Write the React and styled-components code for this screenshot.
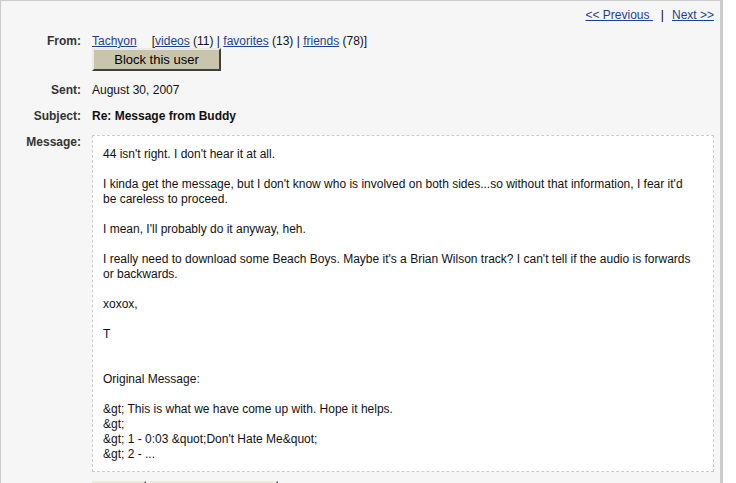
import styled, { createGlobalStyle } from "styled-components";

const Global = createGlobalStyle`
  html, body {
    margin: 0;
    padding: 0;
    background: #ffffff;
  }
  body {
    font-family: "Liberation Sans", Arial, sans-serif;
    font-size: 12px;
    color: #000;
  }
`;

const Panel = styled.div`
  width: 719px;
  height: 483px;
  overflow: hidden;
  background-color: #f6f6f6;
  border-top: 1px solid #cccccc;
  border-left: 1px solid #cccccc;
  border-right: 3px solid #cccccc;
`;

const Nav = styled.div`
  display: flex;
  justify-content: flex-end;
  align-items: center;
  gap: 8px;
  height: 27px;
  padding-right: 6px;
  line-height: 14px;
  box-sizing: border-box;
`;

const Link = styled.a`
  color: #1c3f94;
  text-decoration: underline;
  cursor: pointer;
  white-space: pre;
`;

const Sep = styled.span`
  color: #000;
`;

const Grid = styled.div`
  display: grid;
  grid-template-columns: 80px 622px;
  column-gap: 11px;
`;

const Label = styled.div`
  padding: 6px 0;
  text-align: right;
  font-weight: bold;
  color: #333333;
  line-height: 14px;
`;

const Value = styled.div`
  padding: 6px 0;
  line-height: 14px;
  font-weight: ${(p) => (p.$bold ? "bold" : "normal")};
  color: #111;
`;

const UserLine = styled.div`
  display: flex;
  gap: 15px;
`;

const Button = styled.button`
  display: block;
  font-family: "Liberation Sans", Arial, sans-serif;
  font-size: 13px;
  height: 23px;
  width: ${(p) => p.$w || "auto"};
  padding: 0 12px;
  background-color: #c9c5ad;
  color: #000;
  border-top: 2px solid #ecebe2;
  border-left: 2px solid #ecebe2;
  border-right: 2px solid #404040;
  border-bottom: 2px solid #404040;
  cursor: pointer;
`;

const MessageBox = styled.div`
  background: #ffffff;
  border: 1px dashed #cccccc;
  padding: 11px 22px 9px 10px;
  line-height: 15px;
  color: #111;
`;

const Para = styled.p`
  margin: 0 0 15px;
  &:last-child {
    margin-bottom: 0;
  }
`;

const Actions = styled.div`
  display: flex;
  gap: 4px;
  padding-top: 9px;
`;

const App = () => {
  return (
    <>
      <Global />
      <Panel>
        <Nav>
          <Link>{"<< Previous "}</Link>
          <Sep>|</Sep>
          <Link>{"Next >>"}</Link>
        </Nav>
        <Grid>
          <Label>From:</Label>
          <Value>
            <UserLine>
              <Link>Tachyon</Link>
              <span>
                [<Link>videos</Link> (11) | <Link>favorites</Link> (13) |{" "}
                <Link>friends</Link> (78)]
              </span>
            </UserLine>
            <Button $w="129px">Block this user</Button>
          </Value>

          <Label>Sent:</Label>
          <Value>August 30, 2007</Value>

          <Label>Subject:</Label>
          <Value $bold>Re: Message from Buddy</Value>

          <Label>Message:</Label>
          <Value>
            <MessageBox>
              <Para>44 isn't right. I don't hear it at all.</Para>
              <Para>
                I kinda get the message, but I don't know who is involved on both
                sides...so without that information, I fear it'd be careless to
                proceed.
              </Para>
              <Para>I mean, I'll probably do it anyway, heh.</Para>
              <Para>
                I really need to download some Beach Boys. Maybe it's a Brian
                Wilson track? I can't tell if the audio is forwards or backwards.
              </Para>
              <Para>xoxox,</Para>
              <Para>T</Para>
              <Para>
                <br />
                Original Message:
              </Para>
              <Para>
                &amp;gt; This is what we have come up with. Hope it helps.
                <br />
                &amp;gt;
                <br />
                &amp;gt; 1 - 0:03 &amp;quot;Don't Hate Me&amp;quot;
                <br />
                &amp;gt; 2 - ...
              </Para>
            </MessageBox>
            <Actions>
              <Button $w="54px">Reply</Button>
              <Button $w="128px">Send to a friend</Button>
            </Actions>
          </Value>
        </Grid>
      </Panel>
    </>
  );
};

export default App;
